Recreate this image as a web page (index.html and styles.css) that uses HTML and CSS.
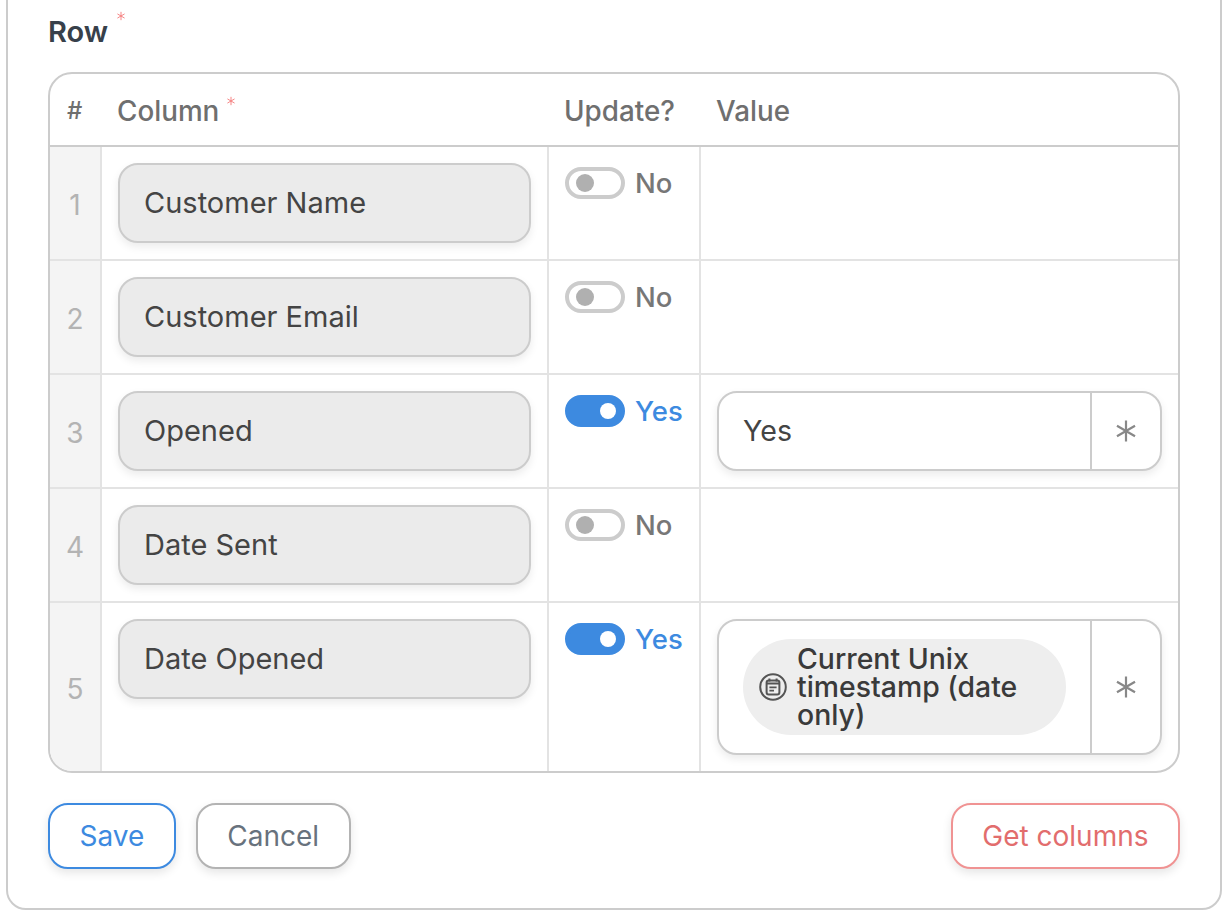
FILE: index.html
```html
<!DOCTYPE html>
<html lang="en">

<head>
  <meta charset="UTF-8">
  <meta name="viewport" content="width=device-width, initial-scale=1.0">
  <title>Update row</title>
  <link rel="stylesheet" href="styles.css">
</head>

<body>
  <div class="card">
    <div class="field-label">
      Row
      <svg class="req req-label" viewBox="0 0 12 12"><path d="M6 1v10M1.7 3.5l8.6 5M10.3 3.5l-8.6 5" /></svg>
    </div>

    <div class="table-wrap">
      <table class="grid">
        <colgroup>
          <col class="col-num">
          <col class="col-name">
          <col class="col-update">
          <col class="col-value">
        </colgroup>
        <thead>
          <tr>
            <th class="th-num">#</th>
            <th>Column<svg class="req req-head" viewBox="0 0 12 12"><path d="M6 1v10M1.7 3.5l8.6 5M10.3 3.5l-8.6 5" /></svg></th>
            <th>Update?</th>
            <th>Value</th>
          </tr>
        </thead>
        <tbody>
          <tr>
            <td class="num">1</td>
            <td class="name"><div class="readonly">Customer Name</div></td>
            <td class="update"><div class="switch"><span class="toggle"></span>No</div></td>
            <td class="value"></td>
          </tr>
          <tr>
            <td class="num">2</td>
            <td class="name"><div class="readonly">Customer Email</div></td>
            <td class="update"><div class="switch"><span class="toggle"></span>No</div></td>
            <td class="value"></td>
          </tr>
          <tr>
            <td class="num">3</td>
            <td class="name"><div class="readonly">Opened</div></td>
            <td class="update"><div class="switch on"><span class="toggle"></span>Yes</div></td>
            <td class="value">
              <div class="mapper">
                <div class="mapper-text">Yes</div>
                <div class="mapper-btn"><svg class="star" viewBox="0 0 20 20"><path d="M10 .5v19M1.8 5.2l16.4 9.6M18.2 5.2L1.8 14.8" /></svg></div>
              </div>
            </td>
          </tr>
          <tr>
            <td class="num">4</td>
            <td class="name"><div class="readonly">Date Sent</div></td>
            <td class="update"><div class="switch"><span class="toggle"></span>No</div></td>
            <td class="value"></td>
          </tr>
          <tr class="last">
            <td class="num">5</td>
            <td class="name"><div class="readonly">Date Opened</div></td>
            <td class="update"><div class="switch on"><span class="toggle"></span>Yes</div></td>
            <td class="value">
              <div class="mapper">
                <div class="mapper-text has-pill">
                  <div class="pill">
                    <svg class="pill-icon" viewBox="0 0 28 28">
                      <circle cx="14" cy="14" r="12.8" />
                      <rect x="7.6" y="7.4" width="12.8" height="14" rx="2.2" />
                      <path d="M7.6 10.6h12.8M10.4 5.6v3M17.6 5.6v3" />
                      <path class="thin" d="M10.4 14.4h7.2M10.4 17.6h4.6" />
                    </svg>
                    <span>Current Unix timestamp (date only)</span>
                  </div>
                </div>
                <div class="mapper-btn"><svg class="star" viewBox="0 0 20 20"><path d="M10 .5v19M1.8 5.2l16.4 9.6M18.2 5.2L1.8 14.8" /></svg></div>
              </div>
            </td>
          </tr>
        </tbody>
      </table>
    </div>

    <div class="actions">
      <button class="btn btn-blue">Save</button>
      <button class="btn btn-grey">Cancel</button>
      <button class="btn btn-red">Get columns</button>
    </div>
  </div>
</body>

</html>
```

FILE: styles.css
```css
* {
  box-sizing: border-box;
}

html,
body {
  height: 918px;
  overflow: hidden;
}

body {
  margin: 0;
  background-color: #fff;
  font-family: Inter, "Liberation Sans", sans-serif;
  color: #444;
}

/* top of the card is cut off by the window */
.card {
  margin: -40px 6px 0 6px;
  height: 950px;
  padding: 54px 40px 0 40px;
  border: 2px solid #ccc;
  border-radius: 20px;
}

.field-label {
  display: flex;
  align-items: flex-start;
  height: 44px;
  font-size: 29px;
  line-height: 32px;
  font-weight: 600;
  color: #37404a;
}

.req {
  fill: none;
  stroke: #f47c7c;
  stroke-width: 1.1;
}

.req-label {
  width: 10px;
  height: 10px;
  margin: -5px 0 0 8px;
}

.req-head {
  width: 10px;
  height: 10px;
  margin-left: 7px;
  vertical-align: 15px;
}

/* table ======== */
.table-wrap {
  margin-top: 12px;
  border: 2px solid #ccc;
  border-radius: 24px;
  overflow: hidden;
}

.grid {
  width: 100%;
  table-layout: fixed;
  border-collapse: separate;
  border-spacing: 0;
}

.col-num {
  width: 52px;
}

.col-name {
  width: 447px;
}

.col-update {
  width: 152px;
}

.grid th {
  height: 73px;
  padding: 2px 0 0 15px;
  border-bottom: 2px solid #ccc;
  text-align: left;
  font-size: 27.8px;
  font-weight: 500;
  color: #6f6f6f;
}

.grid .th-num {
  padding-left: 17px;
  font-size: 24px;
}

.grid td {
  height: 114px;
  padding: 16px 16px 0 16px;
  border-bottom: 2px solid #e3e3e3;
  border-right: 2px solid #e3e3e3;
  vertical-align: top;
}

.grid td:last-child {
  border-right: 0;
}

.grid .last td {
  height: 168px;
  border-bottom: 0;
}

.grid .num {
  padding: 3px 0 0 0;
  background-color: #f4f4f4;
  text-align: center;
  vertical-align: middle;
  font-size: 28px;
  color: #b3b3b3;
}

.readonly {
  height: 80px;
  padding-left: 24px;
  border: 2px solid #ccc;
  border-radius: 20px;
  background-color: #ebebeb;
  box-shadow: 0 4px 8px rgba(0, 0, 0, 0.08);
  font-size: 29px;
  line-height: 75px;
  color: #444;
}

/* toggle ======== */
.grid .update {
  padding-top: 20px;
}

.switch {
  display: flex;
  align-items: center;
  gap: 10px;
  font-size: 27.5px;
  line-height: 32px;
  font-weight: 500;
  color: #777;
}

.toggle {
  position: relative;
  width: 60px;
  height: 32px;
  border: 4px solid #ccc;
  border-radius: 16px;
  background-color: #fff;
}

.toggle:after {
  content: '';
  position: absolute;
  left: 7px;
  top: 3px;
  width: 18px;
  height: 18px;
  border-radius: 50%;
  background-color: #b0b0b0;
}

.switch.on {
  color: #3d8ae0;
}

.switch.on .toggle {
  border-color: #3d8ae0;
  background-color: #3d8ae0;
}

.switch.on .toggle:after {
  left: 31px;
  top: 4px;
  width: 16px;
  height: 16px;
  background-color: #fff;
}

/* value input ======== */
.mapper {
  display: flex;
  min-height: 80px;
  border: 2px solid #ccc;
  border-radius: 20px;
  background-color: #fff;
  box-shadow: 0 4px 8px rgba(0, 0, 0, 0.08);
}

.mapper-text {
  flex: 1;
  padding-left: 24px;
  font-size: 28.6px;
  line-height: 76px;
  color: #444;
}

.mapper-text.has-pill {
  padding: 18px 24px 18px 24px;
}

.mapper-btn {
  display: flex;
  align-items: center;
  justify-content: center;
  width: 70px;
  border-left: 2px solid #ccc;
}

.star {
  width: 22px;
  height: 22px;
  fill: none;
  stroke: #888;
  stroke-width: 2;
}

.pill {
  display: flex;
  align-items: center;
  gap: 10px;
  min-height: 96px;
  padding: 0 24px 0 16px;
  border-radius: 48px;
  background-color: #eee;
  font-size: 28.4px;
  line-height: 28px;
  font-weight: 500;
  color: #3a3a3a;
}

.pill-icon {
  flex: none;
  width: 28px;
  height: 28px;
  fill: none;
  stroke: #555;
  stroke-width: 2;
}

.pill-icon .thin {
  stroke-width: 1.6;
}

/* buttons ======== */
.actions {
  display: flex;
  gap: 20px;
  margin-top: 30px;
}

.btn {
  height: 66px;
  padding: 0 29.5px;
  border: 2px solid #ccc;
  border-radius: 20px;
  background-color: #fff;
  box-shadow: 0 4px 10px rgba(0, 0, 0, 0.1);
  font-family: inherit;
  font-size: 28px;
}

.btn-blue {
  border-color: #3d8ae0;
  color: #3d8ae0;
}

.btn-grey {
  border-color: #b3b3b3;
  color: #68727d;
}

.btn-red {
  margin-left: auto;
  border-color: #f09393;
  color: #e26d6d;
}
```
